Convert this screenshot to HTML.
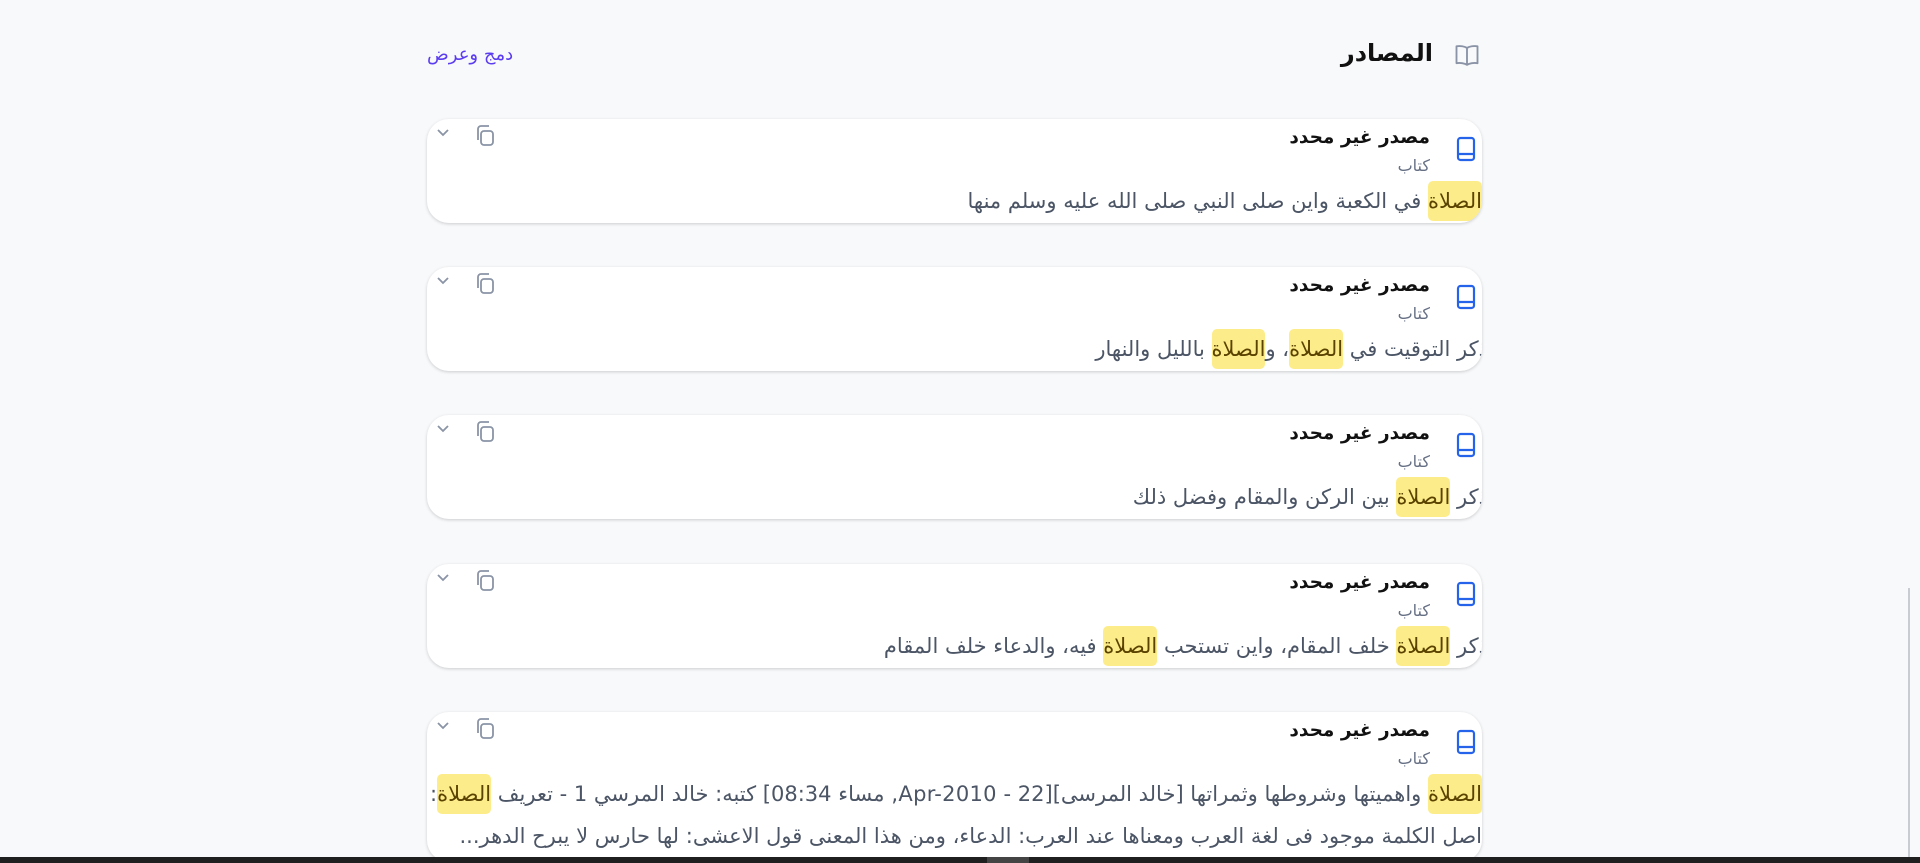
<!DOCTYPE html>
<html><head><meta charset="utf-8"><style>
body{margin:0;width:1920px;height:863px;background:#f8f9fb;font-family:"DejaVu Sans","Liberation Sans",sans-serif;overflow:hidden;position:relative}
.a{position:absolute}
.card{position:absolute;left:427px;width:1055px;height:104px;background:#fff;border-radius:22px;box-shadow:0 1px 3px rgba(0,0,0,.18);overflow:hidden}
.title{position:absolute;right:52px;top:8px;font-size:18.5px;font-weight:bold;color:#111;direction:rtl;white-space:nowrap}
.kind{position:absolute;right:52px;top:37px;font-size:16px;color:#667085;direction:rtl}
.txt{position:absolute;right:0;font-size:21px;color:#4b5565;direction:rtl;white-space:nowrap;line-height:42px}
mark{background:#fdec8a;color:#5a4300;border-radius:5px;padding:8px 0}
.ic{position:absolute;right:6px;top:16px}
.cp{position:absolute;left:46px;top:4px}
.ch{position:absolute;left:8px;top:8px}
</style></head><body>
<svg class="a" style="left:1452px;top:41px" width="30" height="28" viewBox="0 0 24 24" fill="none" stroke="#8a94a6" stroke-width="1.6" stroke-linejoin="round"><path d="M12 6C10 4.5 6 4 3 4.5V19c3-.5 7 0 9 1.5 2-1.5 6-2 9-1.5V4.5C18 4 14 4.5 12 6z M12 6v14.5"/></svg>
<div class="a" style="right:487px;top:39px;font-size:24px;font-weight:bold;color:#111;direction:rtl">المصادر</div>
<div class="a" style="left:427px;top:44px;font-size:18px;color:#5b3cf0;direction:rtl">دمج وعرض</div>

<div class="card" style="top:119px">
<svg class="ic" width="20" height="28" viewBox="0 0 20 28" fill="none" stroke="#2563eb" stroke-width="2.2"><rect x="2" y="3" width="16" height="22" rx="2.5"/><path d="M2 19h16"/></svg>
<div class="title">مصدر غير محدد</div><div class="kind">كتاب</div>
<svg class="cp" width="24" height="26" viewBox="0 0 24 26" fill="none" stroke="#8a94a6" stroke-width="1.8"><rect x="8" y="8" width="12" height="14" rx="3"/><path d="M5 17V6a3 3 0 0 1 3-3h8"/></svg>
<svg class="ch" width="16" height="12" viewBox="0 0 16 12" fill="none" stroke="#8a94a6" stroke-width="1.8"><path d="M3 3l5 5 5-5"/></svg>
<div class="txt" style="top:61px"><mark>الصلاة</mark> في الكعبة واين صلى النبي صلى الله عليه وسلم منها</div>
</div>

<div class="card" style="top:267px">
<svg class="ic" width="20" height="28" viewBox="0 0 20 28" fill="none" stroke="#2563eb" stroke-width="2.2"><rect x="2" y="3" width="16" height="22" rx="2.5"/><path d="M2 19h16"/></svg>
<div class="title">مصدر غير محدد</div><div class="kind">كتاب</div>
<svg class="cp" width="24" height="26" viewBox="0 0 24 26" fill="none" stroke="#8a94a6" stroke-width="1.8"><rect x="8" y="8" width="12" height="14" rx="3"/><path d="M5 17V6a3 3 0 0 1 3-3h8"/></svg>
<svg class="ch" width="16" height="12" viewBox="0 0 16 12" fill="none" stroke="#8a94a6" stroke-width="1.8"><path d="M3 3l5 5 5-5"/></svg>
<div class="txt" style="top:61px;right:-6px">ذكر التوقيت في <mark>الصلاة</mark>، و<mark>الصلاة</mark> بالليل والنهار</div>
</div>

<div class="card" style="top:415px">
<svg class="ic" width="20" height="28" viewBox="0 0 20 28" fill="none" stroke="#2563eb" stroke-width="2.2"><rect x="2" y="3" width="16" height="22" rx="2.5"/><path d="M2 19h16"/></svg>
<div class="title">مصدر غير محدد</div><div class="kind">كتاب</div>
<svg class="cp" width="24" height="26" viewBox="0 0 24 26" fill="none" stroke="#8a94a6" stroke-width="1.8"><rect x="8" y="8" width="12" height="14" rx="3"/><path d="M5 17V6a3 3 0 0 1 3-3h8"/></svg>
<svg class="ch" width="16" height="12" viewBox="0 0 16 12" fill="none" stroke="#8a94a6" stroke-width="1.8"><path d="M3 3l5 5 5-5"/></svg>
<div class="txt" style="top:61px;right:-6px">ذكر <mark>الصلاة</mark> بين الركن والمقام وفضل ذلك</div>
</div>

<div class="card" style="top:564px">
<svg class="ic" width="20" height="28" viewBox="0 0 20 28" fill="none" stroke="#2563eb" stroke-width="2.2"><rect x="2" y="3" width="16" height="22" rx="2.5"/><path d="M2 19h16"/></svg>
<div class="title">مصدر غير محدد</div><div class="kind">كتاب</div>
<svg class="cp" width="24" height="26" viewBox="0 0 24 26" fill="none" stroke="#8a94a6" stroke-width="1.8"><rect x="8" y="8" width="12" height="14" rx="3"/><path d="M5 17V6a3 3 0 0 1 3-3h8"/></svg>
<svg class="ch" width="16" height="12" viewBox="0 0 16 12" fill="none" stroke="#8a94a6" stroke-width="1.8"><path d="M3 3l5 5 5-5"/></svg>
<div class="txt" style="top:61px;right:-6px">ذكر <mark>الصلاة</mark> خلف المقام، واين تستحب <mark>الصلاة</mark> فيه، والدعاء خلف المقام</div>
</div>

<div class="card" style="top:712px;height:150px">
<svg class="ic" width="20" height="28" viewBox="0 0 20 28" fill="none" stroke="#2563eb" stroke-width="2.2"><rect x="2" y="3" width="16" height="22" rx="2.5"/><path d="M2 19h16"/></svg>
<div class="title">مصدر غير محدد</div><div class="kind">كتاب</div>
<svg class="cp" width="24" height="26" viewBox="0 0 24 26" fill="none" stroke="#8a94a6" stroke-width="1.8"><rect x="8" y="8" width="12" height="14" rx="3"/><path d="M5 17V6a3 3 0 0 1 3-3h8"/></svg>
<svg class="ch" width="16" height="12" viewBox="0 0 16 12" fill="none" stroke="#8a94a6" stroke-width="1.8"><path d="M3 3l5 5 5-5"/></svg>
<div class="txt" style="top:61px;left:0;overflow:hidden;letter-spacing:0.3px"><mark>الصلاة</mark> واهميتها وشروطها وثمراتها [خالد المرسى][22 - Apr-2010, مساء 08:34] كتبه: خالد المرسي 1 - تعريف <mark>الصلاة</mark>:</div>
<div class="txt" style="top:103px;left:20px;overflow:hidden;letter-spacing:0.6px">اصل الكلمة موجود فى لغة العرب ومعناها عند العرب: الدعاء، ومن هذا المعنى قول الاعشى: لها حارس لا يبرح الدهر...</div>
</div>

<div class="a" style="left:1908px;top:588px;width:2px;height:270px;background:#c9ccd2"></div>
<div class="a" style="left:0;top:857px;width:1920px;height:6px;background:#1f1f1f"></div>
<div class="a" style="left:987px;top:857px;width:42px;height:6px;background:#444"></div>
</body></html>
